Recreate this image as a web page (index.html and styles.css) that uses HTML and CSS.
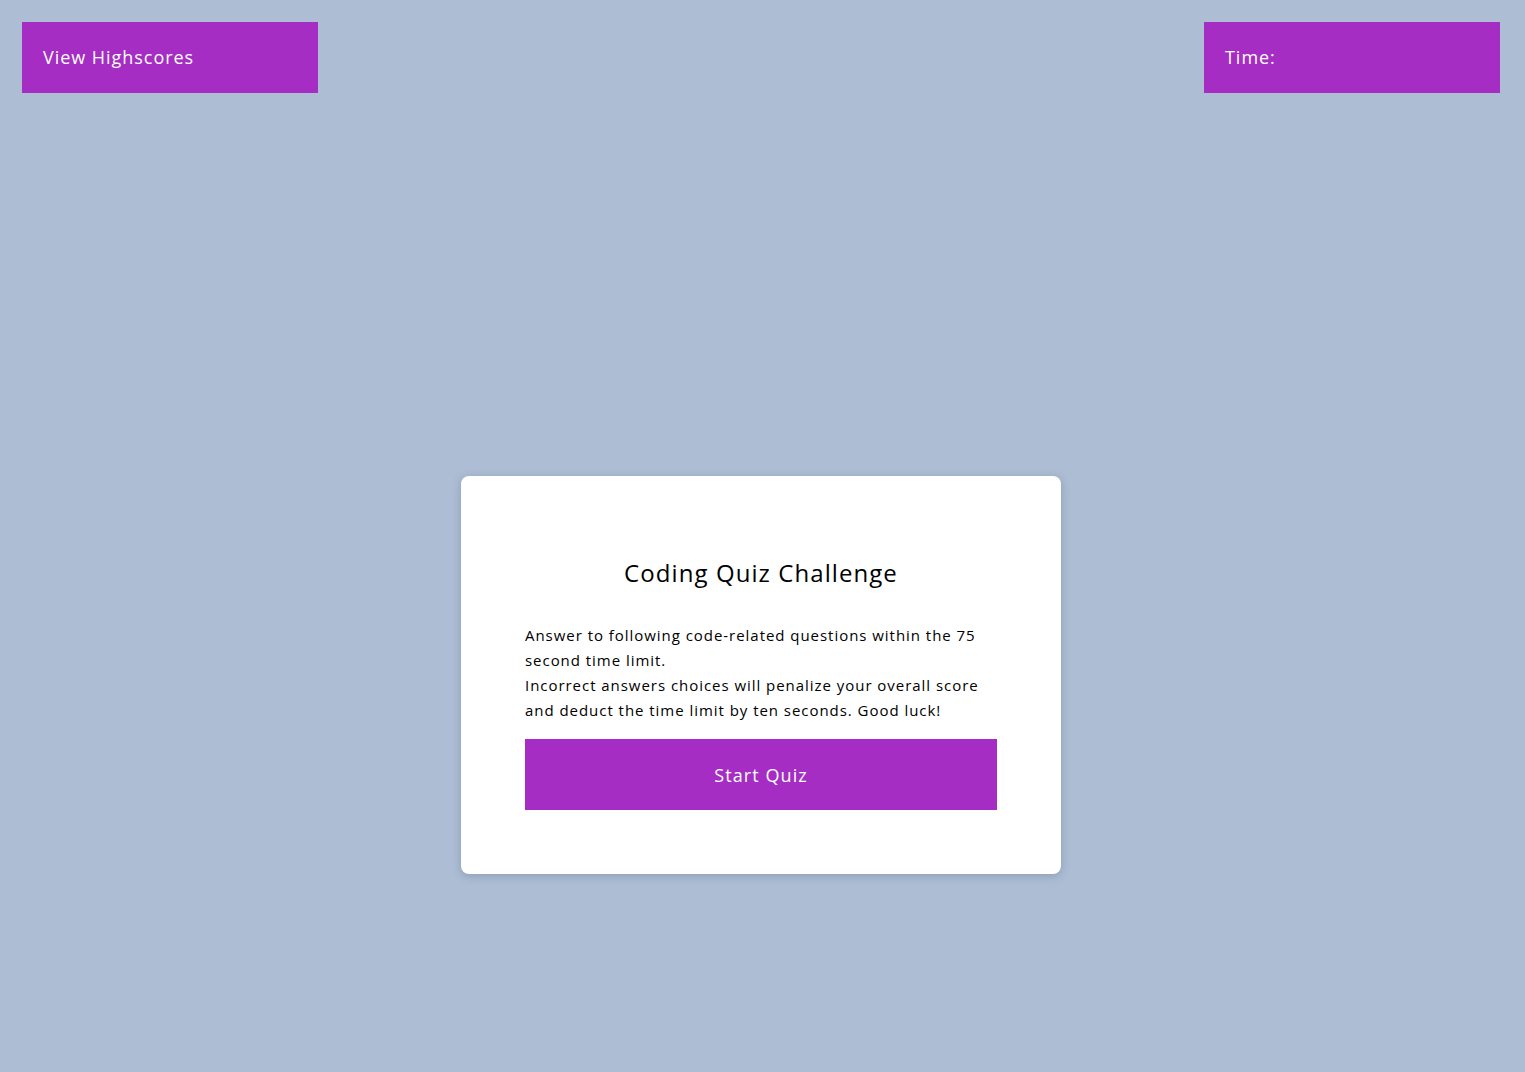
FILE: index.html
```html
<!DOCTYPE html>
<html lang="en">
<head>
<meta charset="utf-8">
<title>Coding Quiz Challenge</title>
<link rel="stylesheet" href="styles.css">
</head>
<body>
<header class="topbar">
  <div class="tag">View Highscores</div>
  <div class="tag">Time:</div>
</header>
<main class="stage">
  <section class="card">
    <h1 class="title">Coding Quiz Challenge</h1>
    <p class="intro">Answer to following code-related questions within the 75 second time limit.<br>Incorrect answers choices will penalize your overall score and deduct the time limit by ten seconds. Good luck!</p>
    <button class="start">Start Quiz</button>
  </section>
</main>
</body>
</html>
```

FILE: styles.css
```css
* { box-sizing: border-box; }
html, body { margin: 0; padding: 0; }
body {
  background: #acbdd4;
  font-family: "Open Sans", "Noto Sans", sans-serif;
  font-weight: 500;
  letter-spacing: 0.06em;
  color: #000;
  min-height: 1072px;
}
.topbar {
  display: flex;
  justify-content: space-between;
  padding: 22px 25px 0 22px;
}
.tag {
  width: 296px;
  height: 71px;
  background: #a52dc3;
  color: #fff;
  font-size: 18px;
  display: flex;
  align-items: center;
  padding: 0 0 2px 21px;
}
.stage {
  display: flex;
  justify-content: center;
  padding: 383px 3px 0 0;
}
.card {
  width: 600px;
  background: #fff;
  border-radius: 8px;
  box-shadow: 0 2px 8px rgba(80, 100, 130, 0.35);
  padding: 64px;
  display: flex;
  flex-direction: column;
}
.title {
  margin: 15px 0 32px;
  font-size: 24px;
  font-weight: 500;
  letter-spacing: 0.045em;
  text-align: center;
  line-height: 36px;
}
.intro {
  margin: 0 0 16px;
  font-size: 15px;
  line-height: 25px;
}
.start {
  height: 71px;
  border: 0;
  background: #a52dc3;
  color: #fff;
  font-family: inherit;
  font-weight: 500;
  font-size: 18px;
  letter-spacing: 0.06em;
  cursor: pointer;
}
```
